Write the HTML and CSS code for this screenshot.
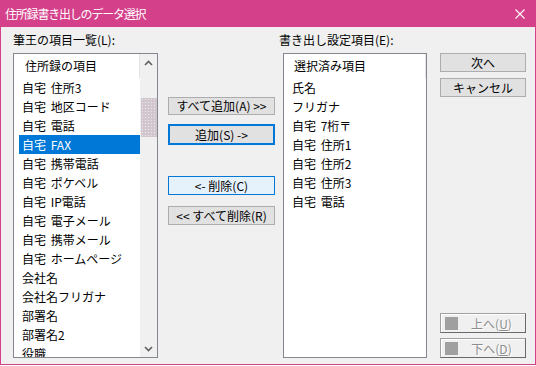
FILE: index.html
```html
<!DOCTYPE html>
<html lang="ja">
<head>
    <meta charset="UTF-8">
    <title>住所録書き出しのデータ選択</title>
    <link rel="stylesheet" href="styles.css">
</head>
<body>
    <div class="window">
        <div class="titlebar">
            <span class="title">住所録書き出しのデータ選択</span>
            <svg class="close" width="10" height="10" viewBox="0 0 10 10">
                <path d="M0.5 0.5 L9.5 9.5 M9.5 0.5 L0.5 9.5" stroke="#fff" stroke-width="1.1" fill="none"/>
            </svg>
        </div>

        <div class="content">
            <!-- source list -->
            <div class="col col-list">
                <div class="field-label">筆王の項目一覧(L):</div>
                <div class="listbox">
                    <div class="list-items">
                        <div class="list-header">住所録の項目</div>
                        <div class="list-item">自宅 住所3</div>
                        <div class="list-item">自宅 地区コード</div>
                        <div class="list-item">自宅 電話</div>
                        <div class="list-item selected">自宅 FAX</div>
                        <div class="list-item">自宅 携帯電話</div>
                        <div class="list-item">自宅 ポケベル</div>
                        <div class="list-item">自宅 IP電話</div>
                        <div class="list-item">自宅 電子メール</div>
                        <div class="list-item">自宅 携帯メール</div>
                        <div class="list-item">自宅 ホームページ</div>
                        <div class="list-item">会社名</div>
                        <div class="list-item">会社名フリガナ</div>
                        <div class="list-item">部署名</div>
                        <div class="list-item">部署名2</div>
                        <div class="list-item">役職</div>
                    </div>
                    <div class="scrollbar">
                        <div class="arrow">
                            <svg width="9" height="6" viewBox="0 0 9 6"><path d="M1 5 L4.5 1.5 L8 5" stroke="#606060" stroke-width="1.6" fill="none"/></svg>
                        </div>
                        <div class="track"><div class="thumb"></div></div>
                        <div class="arrow">
                            <svg width="9" height="6" viewBox="0 0 9 6"><path d="M1 1 L4.5 4.5 L8 1" stroke="#606060" stroke-width="1.6" fill="none"/></svg>
                        </div>
                    </div>
                </div>
            </div>

            <!-- move buttons -->
            <div class="col col-move">
                <div class="btn btn-add-all">すべて追加(A) &gt;&gt;</div>
                <div class="btn btn-add focused">追加(S) -&gt;</div>
                <div class="btn btn-remove hover">&lt;- 削除(C)</div>
                <div class="btn btn-remove-all">&lt;&lt; すべて削除(R)</div>
            </div>

            <!-- export list -->
            <div class="col col-list col-right">
                <div class="field-label">書き出し設定項目(E):</div>
                <div class="listbox">
                    <div class="list-items">
                        <div class="list-header">選択済み項目</div>
                        <div class="list-item">氏名</div>
                        <div class="list-item">フリガナ</div>
                        <div class="list-item">自宅 7桁〒</div>
                        <div class="list-item">自宅 住所1</div>
                        <div class="list-item">自宅 住所2</div>
                        <div class="list-item">自宅 住所3</div>
                        <div class="list-item">自宅 電話</div>
                    </div>
                </div>
            </div>

            <!-- dialog actions -->
            <div class="col col-actions">
                <div class="btn">次へ</div>
                <div class="btn btn-cancel">キャンセル</div>
                <div class="order-buttons">
                    <div class="btn btn-order"><span class="order-icon"></span><span class="order-text">上へ(<u>U</u>)</span></div>
                    <div class="btn btn-order"><span class="order-icon"></span><span class="order-text">下へ(<u>D</u>)</span></div>
                </div>
            </div>
        </div>
    </div>
</body>
</html>
```

FILE: styles.css
```css
body {
    margin: 0;
    background: #ffffff;
    font-family: "Noto Sans CJK JP", "Noto Sans", sans-serif;
    font-size: 12px;
    color: #000000;
}

.window {
    width: 536px;
    height: 365px;
    box-sizing: border-box;
    background: #d5408b;
    padding: 0 1px 1px 1px;
    display: flex;
    flex-direction: column;
}

.titlebar {
    flex-shrink: 0;
    height: 27px;
    display: flex;
    align-items: center;
    justify-content: space-between;
    padding: 0 10px 0 4px;
    color: #ffffff;
}

.title {
    font-size: 12px;
    letter-spacing: -1.2px;
}

.close {
    display: block;
}

.content {
    height: 337px;
    box-sizing: border-box;
    background: #f0f0f0;
    display: flex;
    padding: 6px 0 6px 12px;
}

.col {
    display: flex;
    flex-direction: column;
}

.field-label {
    flex-shrink: 0;
    height: 14px;
    line-height: 14px;
    margin-bottom: 6px;
    white-space: nowrap;
}

.col-list {
    width: 145px;
}

.col-right {
    width: 144px;
    margin-left: 8px;
}

.col-right .field-label {
    margin-left: -4px;
}

.listbox {
    height: 305px;
    box-sizing: border-box;
    display: flex;
    background: #ffffff;
    border: 1px solid #828790;
    overflow: hidden;
}

.list-items {
    flex: 1;
    padding-left: 5px;
    overflow: hidden;
}

.list-header {
    height: 24px;
    line-height: 24px;
    padding-left: 6px;
    border-right: 1px solid #e3e3e3;
    white-space: nowrap;
}

.col-right .list-header {
    padding-left: 5px;
}

.list-item {
    height: 19px;
    line-height: 19px;
    padding-left: 3px;
    white-space: nowrap;
    word-spacing: 2px;
}

.list-item.selected {
    background: #0078d7;
    color: #ffffff;
}

.scrollbar {
    width: 17px;
    background: #f0f0f0;
    display: flex;
    flex-direction: column;
}

.arrow {
    height: 17px;
    display: flex;
    align-items: center;
    justify-content: center;
}

.track {
    flex: 1;
    padding-top: 27px;
}

.thumb {
    height: 39px;
    margin-left: 1px;
    background-color: #d2c6ce;
    background-image: radial-gradient(circle, #ece8eb 0.7px, transparent 0.9px);
    background-size: 3px 3px;
}

.btn {
    box-sizing: border-box;
    height: 19px;
    line-height: 17px;
    background: #e1e1e1;
    border: 1px solid #adadad;
    text-align: center;
    white-space: nowrap;
}

.col-move {
    width: 107px;
    margin-left: 10px;
    padding-top: 64px;
}

.btn-add-all {
    height: 18px;
    line-height: 16px;
}

.btn-add {
    margin-top: 9px;
    height: 21px;
}

.focused {
    border: 2px solid #0078d7;
}

.btn-remove {
    margin-top: 31px;
}

.hover {
    background: #e5f1fb;
    border-color: #0078d7;
}

.btn-remove-all {
    margin-top: 11px;
}

.col-actions {
    width: 86px;
    margin-left: 13px;
    padding-top: 20px;
}

.btn-cancel {
    margin-top: 6px;
}

.order-buttons {
    margin-top: auto;
    display: flex;
    flex-direction: column;
    gap: 5px;
}

.btn-order {
    height: 20px;
    display: flex;
    align-items: center;
    background: #f0f0f0;
    border-color: #a0a0a0 #696969 #696969 #a0a0a0;
    box-shadow: inset 1px 1px 0 #ffffff;
    color: #8d8d8d;
}

.order-icon {
    width: 13px;
    height: 13px;
    margin-left: 4px;
    background: #a0a0a0;
}

.order-text {
    flex: 1;
    text-align: center;
    text-shadow: 1px 1px 0 #ffffff;
}
```
